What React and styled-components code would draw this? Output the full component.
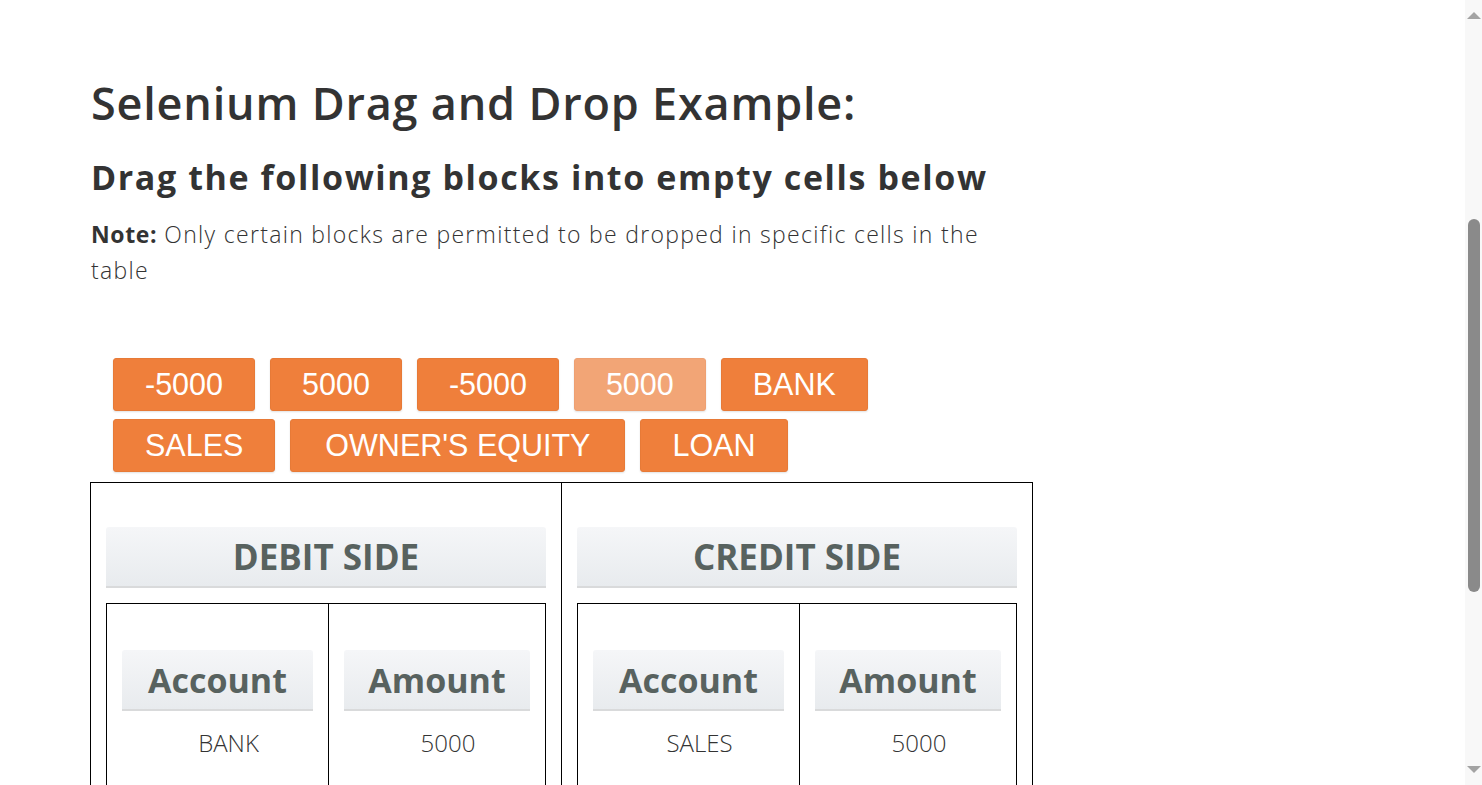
import React from 'react';
import styled, { createGlobalStyle } from 'styled-components';

const GlobalStyle = createGlobalStyle`
  html, body {
    margin: 0;
    padding: 0;
    background: #ffffff;
    overflow: hidden;
  }
  body {
    font-family: "Open Sans", "Noto Sans", sans-serif;
    color: #333333;
  }
`;

const blocks = [
  [
    { label: '-5000' },
    { label: '5000' },
    { label: '-5000' },
    { label: '5000', faded: true },
    { label: 'BANK' },
  ],
  [{ label: 'SALES' }, { label: "OWNER'S EQUITY", wide: true }, { label: 'LOAN' }],
];

const sides = [
  { title: 'DEBIT SIDE', account: 'BANK', amount: '5000' },
  { title: 'CREDIT SIDE', account: 'SALES', amount: '5000' },
];

const App = () => {
  return (
    <Page>
      <GlobalStyle />
      <Main>
        <Title>Selenium Drag and Drop Example:</Title>
        <Subtitle>Drag the following blocks into empty cells below</Subtitle>
        <Note>
          <NoteLabel>Note:</NoteLabel> Only certain blocks are permitted to be dropped in specific cells in
          the table
        </Note>

        <Blocks>
          {blocks.map((row, i) => (
            <BlockRow key={i}>
              {row.map((b, j) => (
                <Block key={j} $faded={b.faded} $wide={b.wide}>
                  {b.label}
                </Block>
              ))}
            </BlockRow>
          ))}
        </Blocks>

        <Board>
          {sides.map((side) => (
            <SideCell key={side.title}>
              <SideHeader>{side.title}</SideHeader>
              <InnerTable>
                <InnerCell>
                  <ColHeader>Account</ColHeader>
                  <Value>{side.account}</Value>
                </InnerCell>
                <InnerCell>
                  <ColHeader>Amount</ColHeader>
                  <Value>{side.amount}</Value>
                </InnerCell>
              </InnerTable>
            </SideCell>
          ))}
        </Board>
      </Main>

      <ScrollTrack>
        <Arrow $up />
        <TrackBody>
          <Thumb />
        </TrackBody>
        <Arrow />
      </ScrollTrack>
    </Page>
  );
};

const Page = styled.div`
  display: flex;
  height: 100vh;
  overflow: hidden;
`;

const Main = styled.div`
  flex: 1;
  padding: 75px 0 0 91px;
`;

const Title = styled.h1`
  margin: 0;
  font-size: 45px;
  line-height: 56px;
  font-weight: 600;
  letter-spacing: 0.8px;
  color: #333333;
`;

const Subtitle = styled.h2`
  margin: 24px 0 0;
  font-size: 34px;
  line-height: 44px;
  font-weight: 700;
  letter-spacing: 1.6px;
  color: #333333;
`;

const Note = styled.p`
  width: 930px;
  margin: 17px 0 0;
  font-size: 23px;
  line-height: 36px;
  font-weight: 300;
  letter-spacing: 1.3px;
  color: #333333;
`;

const NoteLabel = styled.b`
  font-weight: 700;
  letter-spacing: 0.6px;
`;

const Blocks = styled.div`
  display: flex;
  flex-direction: column;
  gap: 8px;
  margin-top: 70px;
  padding-left: 22px;
`;

const BlockRow = styled.div`
  display: flex;
  gap: 15px;
`;

const Block = styled.div`
  height: 53px;
  padding: 0 ${(p) => (p.$wide ? '34px' : '31px')};
  box-sizing: border-box;
  display: flex;
  align-items: center;
  justify-content: center;
  font-family: "Liberation Sans", Arial, sans-serif;
  font-size: 30.5px;
  color: #ffffff;
  background: ${(p) => (p.$faded ? '#f2a576' : '#ef7f3b')};
  border: 1px solid ${(p) => (p.$faded ? '#eea072' : '#e77a37')};
  border-radius: 3px;
  box-shadow: 0 1px 2px rgba(0, 0, 0, 0.12);
`;

const Board = styled.div`
  width: 943px;
  margin: 10px 0 0 -1px;
  box-sizing: border-box;
  display: grid;
  grid-template-columns: 470px 471px;
  border: 1px solid #000000;
  border-bottom: none;
  height: 400px;
`;

const SideCell = styled.div`
  padding: 44px 15px 0;
  & + & {
    border-left: 1px solid #000000;
  }
`;

const headerBox = `
  display: flex;
  align-items: center;
  justify-content: center;
  background: linear-gradient(to bottom, #f5f6f8, #e8ebee);
  border-bottom: 2px solid #d9dadb;
  border-radius: 3px 3px 0 0;
  color: #58625f;
  font-weight: 700;
  box-sizing: border-box;
`;

const SideHeader = styled.div`
  ${headerBox}
  height: 61px;
  font-size: 35px;
`;

const InnerTable = styled.div`
  margin-top: 15px;
  display: grid;
  grid-template-columns: 221px 1fr;
  border: 1px solid #000000;
  border-bottom: none;
  height: 300px;
`;

const InnerCell = styled.div`
  padding: 46px 15px 0;
  & + & {
    border-left: 1px solid #000000;
  }
`;

const ColHeader = styled.div`
  ${headerBox}
  height: 61px;
  font-size: 34px;
`;

const Value = styled.div`
  margin-top: 17px;
  padding-left: 22px;
  text-align: center;
  font-size: 24px;
  line-height: 30px;
  font-weight: 300;
  color: #333333;
`;

const ScrollTrack = styled.div`
  width: 17px;
  height: 100%;
  background: #f8f8f8;
  display: flex;
  flex-direction: column;
  align-items: center;
`;

const Arrow = styled.div`
  width: 0;
  height: 0;
  margin: ${(p) => (p.$up ? '12px 0 0' : '0 0 12px')};
  border-left: 7px solid transparent;
  border-right: 7px solid transparent;
  ${(p) =>
    p.$up ? 'border-bottom: 7px solid #a3a3a3;' : 'border-top: 7px solid #a3a3a3;'}
`;

const TrackBody = styled.div`
  flex: 1;
  width: 100%;
  display: flex;
  justify-content: center;
  padding-top: 200px;
  box-sizing: border-box;
`;

const Thumb = styled.div`
  width: 12px;
  height: 373px;
  border-radius: 6px;
  background: #8a8a8a;
`;

export default App;
